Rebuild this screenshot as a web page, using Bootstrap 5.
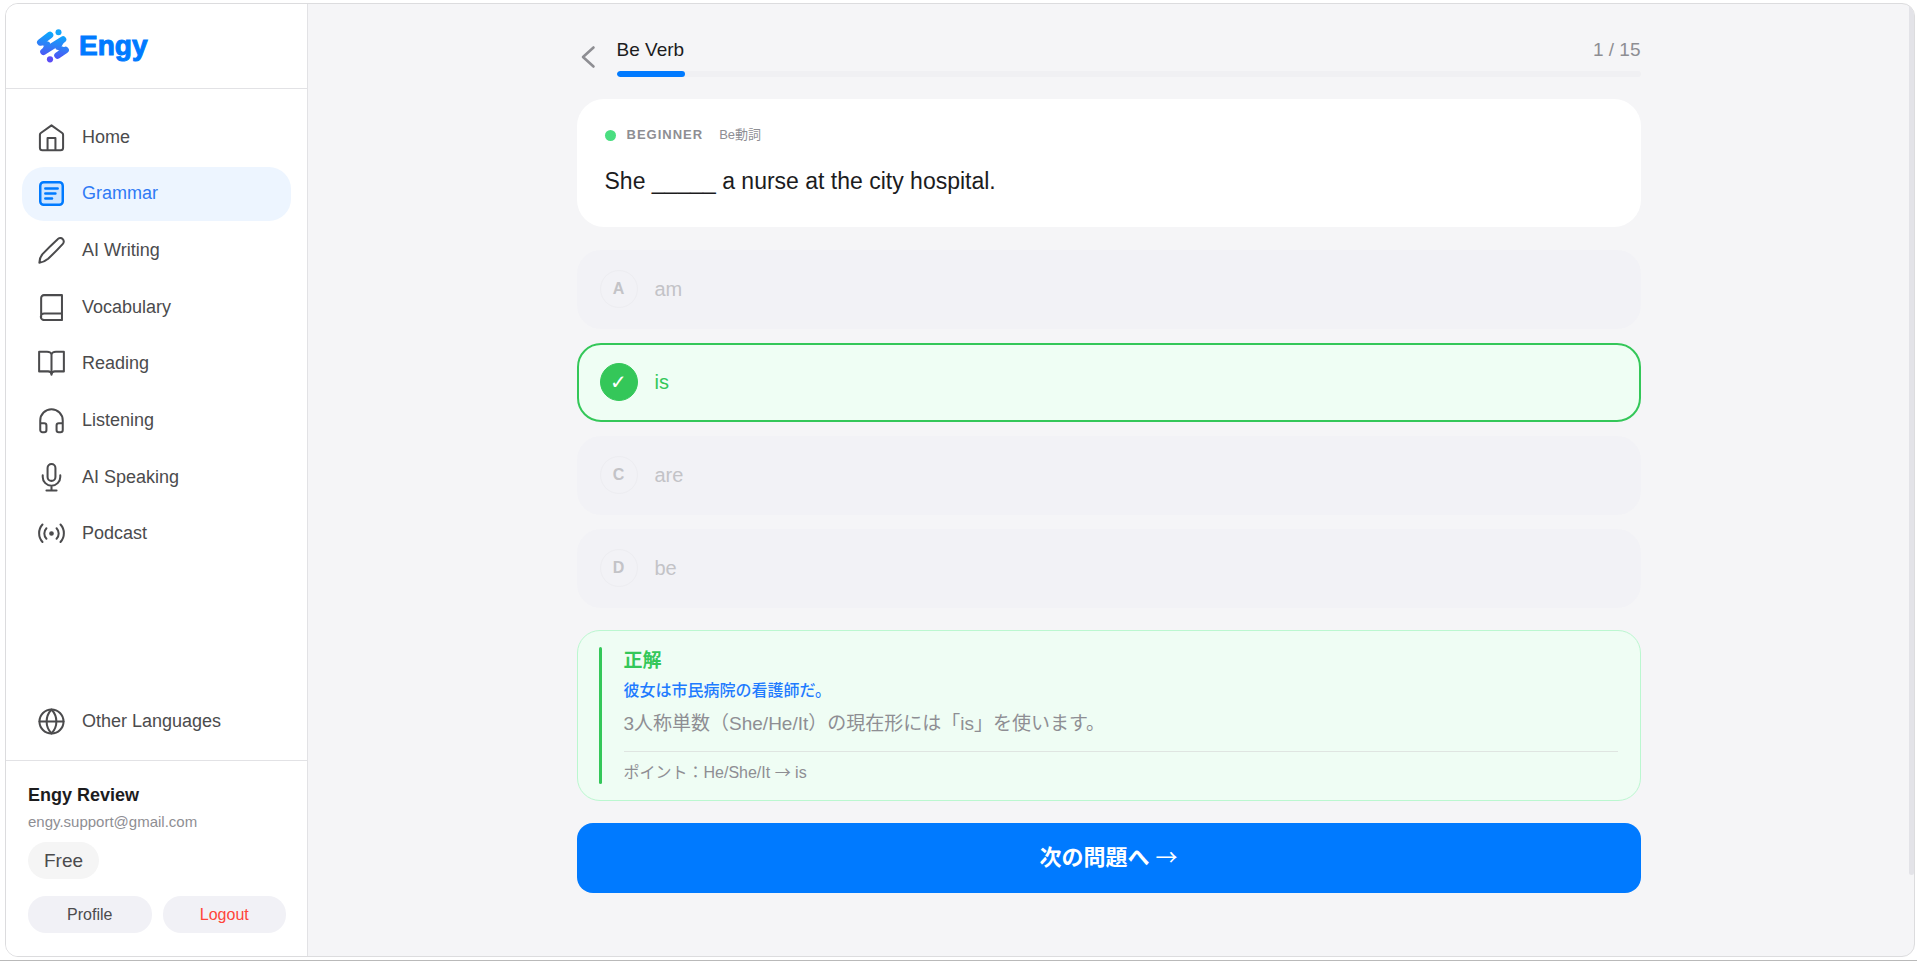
<!DOCTYPE html>
<html lang="ja">
<head>
<meta charset="utf-8">
<meta name="viewport" content="width=device-width, initial-scale=1">
<title>Engy – Be Verb</title>
<link href="https://cdn.jsdelivr.net/npm/bootstrap@5.3.0/dist/css/bootstrap.min.css" rel="stylesheet">
<style>
  :root { --blue: #007aff; --green: #34c759; --line: #e2e2e5; --ink: #4b4b4d; --soft: #8e8e93; --pale: #f2f2f7; }
  body { font-family: "Liberation Sans", "Noto Sans CJK JP", sans-serif; background: #fff; color: #1c1c1e; }
  .page-shell { height: 100vh; padding: 3px 2px 3px 5px; border-bottom: 1px solid #b9b9b9; }
  .app-window { border: 1px solid #dcdcde; border-radius: 13px; background: #f5f5f7; overflow: hidden; }
  .side-panel { width: 302px; background: #fff; border-right: 1px solid var(--line); }
  .brand-row { height: 85px; padding: 0 0 0 30px; border-bottom: 1px solid var(--line); }
  .brand-row a { color: var(--blue); font: 700 28px/32px "Liberation Sans", sans-serif; -webkit-text-stroke: 1px var(--blue); gap: 9px; }
  .side-menu { height: 451px; margin: 21px 16px 0; }
  .side-item { height: 54px; padding: 0 16px; gap: 17px; border-radius: 22px; color: var(--ink); font-size: 18px; }
  .side-item.active { background: #edf5ff; color: #2f7af5; }
  .side-item svg, .back-link svg { fill: none; stroke: currentColor; stroke-width: 2; stroke-linecap: round; stroke-linejoin: round; }
  .side-item svg { width: 27px; height: 27px; stroke-width: 1.8; }
  .side-item.active svg { color: var(--blue); }
  .account-box { padding: 21px 21px 23px 22px; border-top: 1px solid var(--line); }
  .account-name { font-size: 18px; line-height: 26px; }
  .account-mail { font-size: 15px; line-height: 28px; color: var(--soft); }
  .plan-pill { margin-top: 6px; padding: 0 16px; font-size: 19px; line-height: 37px; border-radius: 19px; background: #f5f5f5; color: var(--ink); }
  .account-actions { margin-top: 17px; gap: 11px; }
  .pill-btn { height: 37px; padding: 0; border: 0; border-radius: 18px; background: #f1f1f6; color: var(--ink); font-size: 16px; }
  .pill-btn.leave { color: #ff453a; }
  .scroll-thumb { width: 5px; height: 91.5%; background: #e3e3e8; border-radius: 0 0 3px 3px; }
  .quiz { width: 100%; max-width: 1064px; padding-top: 34px; }
  .back-link { width: 40px; padding: 6px 0 0 1px; color: var(--soft); }
  .quiz-title { font-size: 19px; line-height: 24px; }
  .quiz-count { font-size: 19px; line-height: 24px; color: var(--soft); }
  .quiz .progress { height: 6px; margin-top: 9px; background: #f0f0f3; border-radius: 3px; }
  .quiz .progress-bar { background: var(--blue); border-radius: 3px; }
  .question { margin-top: 22px; padding: 26px 28px 29px; border-radius: 27px; background: #fff; }
  .dot { width: 11px; height: 11px; background: #4ade80; }
  .level { margin-left: 11px; font-size: 13px; line-height: 20px; letter-spacing: 1px; color: var(--soft); }
  .topic { margin-left: 16px; font-size: 13px; line-height: 20px; color: var(--soft); }
  .prompt { margin: 19px 0 0; font-size: 23px; line-height: 34px; }
  .choices { margin-top: 23px; gap: 14px; }
  .choice { height: 79px; padding: 0 21px 1px; gap: 17px; border: 2px solid transparent; border-radius: 24px; background: #f2f2f6; color: #c3c3c7; font-size: 20px; text-align: left; }
  .choice.right { border-color: var(--green); background: #effef4; color: var(--green); }
  .mark-ring { width: 38px; height: 38px; border: 1px solid #ededf1; font-size: 16px; font-weight: 700; }
  .right .mark-ring { background: var(--green); border-color: var(--green); color: #fff; font-family: "DejaVu Sans", sans-serif; font-size: 20px; }
  .feedback { margin-top: 22px; padding: 16px 22px 16px 21px; gap: 22px; border: 1px solid #bbf7d0; border-radius: 23px; background: #effdf4; color: var(--soft); }
  .feedback-rule { width: 3px; background: var(--green); border-radius: 2px; }
  .verdict { font-size: 19px; line-height: 28px; color: var(--green); }
  .translation { font-size: 16px; line-height: 32px; font-weight: 500; color: #1f7bff; }
  .reason { font-size: 19px; line-height: 34px; }
  .hint { margin-top: 10px; padding-top: 9px; font-size: 16px; line-height: 23px; border-top: 1px solid #dfe5e1; }
  .arrow { font-family: "Noto Sans CJK JP", sans-serif; font-weight: 400; line-height: 1; }
  .next-btn { margin-top: 22px; height: 70px; padding-bottom: 2px; border: 0; border-radius: 16px; background: var(--blue); color: #fff; font-size: 22px; font-weight: 700; }
</style>
</head>
<body>
<div class="page-shell">
<div class="app-window d-flex h-100">
  <aside class="side-panel d-flex flex-column flex-shrink-0">
    <div class="brand-row d-flex align-items-center">
      <a href="#" class="d-flex align-items-center text-decoration-none">
        <svg width="34" height="34" viewBox="0 0 34 34" aria-hidden="true">
          <defs><linearGradient id="brand" gradientUnits="userSpaceOnUse" x1="20" y1="1" x2="14" y2="34"><stop offset="0" stop-color="#00b4ff"/><stop offset=".55" stop-color="#3478f6"/><stop offset="1" stop-color="#5e3df5"/></linearGradient></defs>
          <g fill="none" stroke="url(#brand)" stroke-linecap="round" stroke-linejoin="round">
            <path stroke-width="6.600" d="M14 6L4.300 13.300M7.500 22.800L27 10.500M29.600 21L21.500 26.500"/>
            <path stroke-width="5" d="M5 13.500L11.500 15L8 22.500M26.500 11L22 18.500L29 21"/>
          </g>
          <circle cx="22.500" cy="3.200" r="3" fill="#14a5fb"/><circle cx="14" cy="30.300" r="3.100" fill="#5b4cf5"/>
        </svg>
        <span>Engy</span>
      </a>
    </div>
    <nav class="side-menu d-flex flex-column justify-content-between">
      <a href="#" class="side-item d-flex align-items-center text-decoration-none"><svg viewBox="0 0 24 24" overflow="visible"><path d="M1.700 9.500V21a2.300 2.300 0 0 0 2.300 2.300H20a2.300 2.300 0 0 0 2.300-2.300V9.500Q22.300 8.600 21.500 8L12 1.200 2.500 8Q1.700 8.600 1.700 9.500zM8.500 23.300V12.500h7v10.800"/></svg>Home</a>
      <a href="#" class="side-item active d-flex align-items-center text-decoration-none" aria-current="page"><svg viewBox="0 0 24 24"><rect x="2" y="2" width="20" height="20" rx="3" fill="#cfe5ff" stroke-width="2.200"/><path stroke-width="2.200" d="M6.500 7.500h11M6.500 12h9M6.500 16.500h6"/></svg>Grammar</a>
      <a href="#" class="side-item d-flex align-items-center text-decoration-none"><svg viewBox="0 0 24 24"><path d="M17.500 1.900a3.100 3.100 0 0 1 4.600 4.200Q15 13.800 9 19.300 5.500 22.300 1.200 22.800 1.200 18.500 4 15.200 10 8.800 17.500 1.900z"/></svg>AI Writing</a>
      <a href="#" class="side-item d-flex align-items-center text-decoration-none"><svg viewBox="0 0 24 24"><path d="M2.800 20.500V3.500A2.500 2.500 0 0 1 5.300 1H21.300V23.200H5.400a2.900 2.900 0 0 1 0-5.800H21.300"/></svg>Vocabulary</a>
      <a href="#" class="side-item d-flex align-items-center text-decoration-none"><svg viewBox="0 0 24 24"><path d="M1 1.500h7a4 3 0 0 1 4 3 4 3 0 0 1 4-3h7v17.500h-8a3 3 0 0 0-3 3 3 3 0 0 0-3-3H1zM12 4.500V22"/></svg>Reading</a>
      <a href="#" class="side-item d-flex align-items-center text-decoration-none"><svg viewBox="0 0 24 24"><path d="M2 20V12a10 10 0 0 1 20 0V20M2 14.500h3.500a2 2 0 0 1 2 2v4a2 2 0 0 1-2 2H4a2 2 0 0 1-2-2zM22 14.500h-3.500a2 2 0 0 0-2 2v4a2 2 0 0 0 2 2H20a2 2 0 0 0 2-2z"/></svg>Listening</a>
      <a href="#" class="side-item d-flex align-items-center text-decoration-none"><svg viewBox="0 0 24 24" overflow="visible"><rect x="8.500" y="0" width="7" height="15" rx="3.500"/><path d="M4.200 10v1.500a7.800 7.800 0 0 0 15.600 0V10M12 19.300V23.500M7.500 23.500h9"/></svg>AI Speaking</a>
      <a href="#" class="side-item d-flex align-items-center text-decoration-none"><svg viewBox="0 0 24 24"><circle cx="12" cy="12" r="1.200" fill="currentColor"/><path d="M4 19.500C0 15.200 0 8.300 4 4M7.500 16.700c-2.500-2.600-2.500-6.800 0-9.400M16.500 7.300c2.500 2.600 2.500 6.800 0 9.400M20 4C24 8.300 24 15.200 20 19.500"/></svg>Podcast</a>
    </nav>
    <div class="mt-auto mx-3 mb-2 pb-1">
      <a href="#" class="side-item d-flex align-items-center text-decoration-none"><svg viewBox="0 0 24 24"><circle cx="12" cy="12" r="10.700"/><path d="M1.300 12h21.400M12 1.300C6.200 7.500 6.200 16.500 12 22.700 17.800 16.500 17.800 7.500 12 1.300z"/></svg>Other Languages</a>
    </div>
    <div class="account-box">
      <div class="account-name fw-bold">Engy Review</div>
      <div class="account-mail">engy.support@gmail.com</div>
      <span class="plan-pill d-inline-block">Free</span>
      <div class="account-actions d-flex">
        <button type="button" class="btn pill-btn flex-fill w-50">Profile</button>
        <button type="button" class="btn pill-btn leave flex-fill w-50">Logout</button>
      </div>
    </div>
  </aside>
  <main class="flex-grow-1 d-flex">
    <div class="flex-grow-1 d-flex justify-content-center">
      <div class="quiz d-flex flex-column">
        <header class="d-flex">
          <a href="#" class="back-link" aria-label="Back"><svg width="26" height="26" viewBox="0 0 26 26" class="d-block"><path stroke-width="2.600" d="M15.500 3.500L5 13l10.500 9.500"/></svg></a>
          <div class="flex-grow-1">
            <div class="d-flex justify-content-between"><span class="quiz-title">Be Verb</span><span class="quiz-count">1 / 15</span></div>
            <div class="progress" role="progressbar" aria-label="Progress" aria-valuenow="1" aria-valuemin="0" aria-valuemax="15"><div class="progress-bar" style="width:6.667%"></div></div>
          </div>
        </header>
        <section class="question">
          <div class="d-flex align-items-center"><span class="dot rounded-circle"></span><span class="level fw-bold">BEGINNER</span><span class="topic">Be動詞</span></div>
          <p class="prompt">She _____ a nurse at the city hospital.</p>
        </section>
        <div class="choices d-flex flex-column">
          <button type="button" class="choice d-flex align-items-center"><span class="mark-ring rounded-circle d-flex align-items-center justify-content-center">A</span>am</button>
          <button type="button" class="choice right d-flex align-items-center"><span class="mark-ring rounded-circle d-flex align-items-center justify-content-center">✓</span>is</button>
          <button type="button" class="choice d-flex align-items-center"><span class="mark-ring rounded-circle d-flex align-items-center justify-content-center">C</span>are</button>
          <button type="button" class="choice d-flex align-items-center"><span class="mark-ring rounded-circle d-flex align-items-center justify-content-center">D</span>be</button>
        </div>
        <section class="feedback d-flex">
          <div class="feedback-rule"></div>
          <div class="flex-grow-1">
            <div class="verdict fw-bold">正解</div>
            <div class="translation">彼女は市民病院の看護師だ。</div>
            <div class="reason">3人称単数（She/He/It）の現在形には「is」を使います。</div>
            <div class="hint">ポイント：He/She/It <span class="arrow">→</span> is</div>
          </div>
        </section>
        <button type="button" class="next-btn">次の問題へ <span class="arrow">→</span></button>
      </div>
    </div>
    <div class="scroll-thumb"></div>
  </main>
</div>
</div>
<script src="https://cdn.jsdelivr.net/npm/bootstrap@5.3.0/dist/js/bootstrap.bundle.min.js"></script>
</body>
</html>
